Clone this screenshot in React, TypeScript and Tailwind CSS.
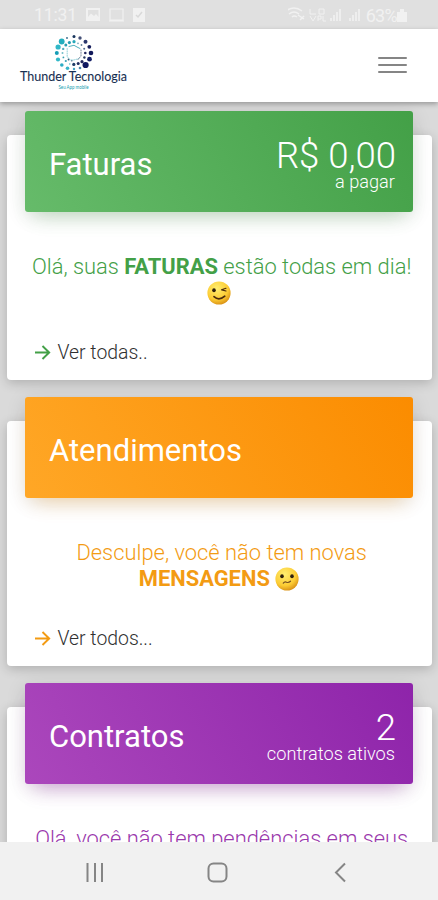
import React from "react";

interface PanelProps {
  title: string;
  value?: string;
  caption?: string;
  headerClass: string;
  textClass: string;
  link?: string;
  children: React.ReactNode;
}

const ArrowIcon: React.FC = () => (
  <svg className="w-4 h-4 flex-shrink-0" viewBox="0 0 16 16" fill="none" stroke="currentColor" strokeWidth="1.9">
    <path d="M0 7.5H14M7.5 1L14.2 7.5L7.5 14" />
  </svg>
);

const Panel: React.FC<PanelProps> = ({
  title,
  value,
  caption,
  headerClass,
  textClass,
  link,
  children,
}) => (
  <section className="h-[245px] flex flex-col rounded bg-white shadow-[0_3px_12px_rgba(0,0,0,0.2)] flex-shrink-0">
    <div
      className={`-mt-6 mx-[18.5px] h-[100.5px] flex-shrink-0 rounded-[3px] pl-6 pr-[18px] flex items-center justify-between text-white ${headerClass}`}
    >
      <h2 className="text-[31px] leading-9 pt-[7px]">{title}</h2>
      {value && (
        <div className="text-right font-light pt-[9px]">
          <div className="text-[36.5px] leading-[33px] -mr-px">{value}</div>
          <div className="text-[18.2px] leading-[20px]">{caption}</div>
        </div>
      )}
    </div>
    <p className={`mt-[42.5px] h-[53px] text-center text-[21.9px] leading-[26px] font-light whitespace-nowrap ${textClass}`}>
      {children}
    </p>
    {link && (
      <div className={`mt-[34px] ml-7 flex items-center gap-[7px] ${textClass}`}>
        <ArrowIcon />
        <span className="text-[19.4px] leading-6 font-light text-[#303030]">{link}</span>
      </div>
    )}
  </section>
);

const Face: React.FC<{ wink?: boolean }> = ({ wink }) => (
  <svg className="inline-block w-6 h-6 align-[-5px]" viewBox="0 0 24 24">
    <defs>
      <radialGradient id={wink ? "winkFill" : "plainFill"} cx="0.4" cy="0.3" r="0.75">
        <stop offset="0" stopColor="#ffee70" />
        <stop offset="0.65" stopColor="#fccb33" />
        <stop offset="1" stopColor="#d58a12" />
      </radialGradient>
    </defs>
    <circle cx="12" cy="12" r="11.6" fill={wink ? "url(#winkFill)" : "url(#plainFill)"} />
    <ellipse cx="7" cy="9.2" rx="1.8" ry="2" fill="#30200d" />
    {wink ? (
      <g fill="none" stroke="#4b2b0c" strokeLinecap="round">
        <path d="M14.5 8.8L19 7.2M14.7 8.9L19 10" strokeWidth="1.1" />
        <path d="M7 15.7Q12 20.3 17.8 15.2" strokeWidth="1.7" />
      </g>
    ) : (
      <>
        <ellipse cx="17" cy="9.2" rx="1.8" ry="2" fill="#30200d" />
        <path
          d="M8.3 16.2Q9.7 14.3 11.5 15.2T15.5 14.2"
          fill="none"
          stroke="#765020"
          strokeWidth="1.2"
          strokeLinecap="round"
        />
      </>
    )}
  </svg>
);

// x, y, radius and color of each dot in the logo ring
const dots: Array<[number, number, number, string]> = [
  [20, 2.5, 1.5, "#17345c"],
  [26, 4, 1.7, "#455077"],
  [31.5, 7.8, 2, "#29366c"],
  [35.3, 12.8, 1.9, "#171f5d"],
  [37, 19, 2.3, "#11185a"],
  [35.5, 25.2, 2.4, "#151f67"],
  [31.6, 31, 3.1, "#10175f"],
  [26, 34, 1.3, "#4c86aa"],
  [20, 35, 1.2, "#44a7c5"],
  [13.5, 34.2, 1.8, "#38b5cb"],
  [7.8, 31, 1.8, "#2dacc4"],
  [4, 25.5, 2.1, "#31b8c8"],
  [2.8, 19, 2, "#159db6"],
  [4.1, 13, 2.6, "#2fb7c7"],
  [7.7, 7.5, 2.9, "#23adbd"],
  [13, 4, 0.9, "#326789"],
  [11.8, 11, 1.5, "#289fb0"],
  [15.4, 8.6, 1.6, "#239eb2"],
  [20, 7.7, 1.6, "#27a8b9"],
  [24, 9.3, 0.9, "#79aebf"],
  [27.5, 11, 0.9, "#62819c"],
  [30.2, 14.8, 1, "#526d90"],
  [31.3, 19, 1.3, "#25285d"],
  [30.4, 23.5, 1.2, "#27385f"],
  [28, 27.7, 1.6, "#22275d"],
  [24.2, 29.6, 1.5, "#202d60"],
  [19.8, 30.4, 1.6, "#203d68"],
  [15.8, 30, 0.7, "#3bb5c6"],
  [11.8, 27, 1.1, "#36a2b7"],
  [9.4, 23.4, 0.9, "#38a1b2"],
  [8.5, 19, 1, "#71bdc7"],
  [9.2, 14.9, 1.2, "#55adbc"],
  [14.6, 25.4, 1, "#39526f"],
  [17.8, 26.8, 0.8, "#455878"],
];

const Logo: React.FC = () => (
  <div className="w-[108px] flex flex-col items-center">
    <svg className="w-[40px] h-[37px]" viewBox="0 0 40 37">
      {dots.map(([x, y, r, color]) => (
        <circle key={`${x}-${y}`} cx={x} cy={y} r={r} fill={color} />
      ))}
      <g fill="none" strokeLinecap="round">
        <path d="M15 12.5L20 11.3L23 13L26 14.5" stroke="#51b1be" strokeWidth="1" />
        <path d="M13.2 14.5V22.5L16 26H20L25 24.5" stroke="#79c7d0" strokeWidth="0.8" strokeDasharray="1 1.3" />
        <path d="M27 16V22L24 25.5" stroke="#596781" strokeWidth="0.8" strokeDasharray="1 1.4" />
      </g>
    </svg>
    <svg className="w-[108px] h-[21px]" viewBox="0 0 108 21" overflow="visible">
      <text x="0" y="9.5" fill="#172f52" stroke="#172f52" strokeWidth="0.1" fontFamily="Lato, sans-serif" fontSize="12.6" textLength="107" lengthAdjust="spacingAndGlyphs">
        Thunder Tecnologia
      </text>
      <text x="38.5" y="17.5" fill="#159eaf" fontFamily="Lato, sans-serif" fontSize="5" textLength="30" lengthAdjust="spacingAndGlyphs">
        Seu App mobile
      </text>
    </svg>
  </div>
);

const StatusBar: React.FC = () => (
  <div className="h-[29px] flex-shrink-0 bg-[#e0e0e0] pl-[34px] pr-[31px] flex items-center justify-between text-[#f1f1f1] text-[17.5px]">
    <div className="flex items-center gap-[9px]">
      <span className="w-[43px] tracking-[-0.1px] pt-0.5">11:31</span>
      <svg className="w-[62px] h-4" viewBox="0 0 62 16">
        <path
          fill="currentColor"
          fillRule="evenodd"
          d="M0 1H14V14H0ZM2 3V10L5 6.5L8 9L10 7L12.5 10V3Z"
        />
        <path d="M24 2H37V13H24ZM23 14H38" fill="none" stroke="currentColor" strokeWidth="1.2" />
        <path d="M47 1H59V15H47Z" fill="currentColor" />
        <path d="M50 8L52 10L56 5" fill="none" stroke="#d9d9d9" strokeWidth="1.5" />
      </svg>
    </div>
    <div className="flex items-center">
      <svg className="w-[76px] h-[17px]" viewBox="0 0 76 17" fill="none" stroke="currentColor">
        <path d="M-2 5Q6-1 14 5M1 8Q6 4 11 8M4 11Q6 9 9 11M10 9L16 13M12 14L16 10" strokeWidth="1.5" />
        <path d="M22 3V8H28M31 3V8H36V3H31M22 10L25 15L28 10M30 15V10H33V13H30M35 10V15H38" />
        <path
          d="M43 15V12M46 15V9M49 15V6M52 15V3M62 15V12M65 15V9M68 15V6M71 15V3"
          strokeWidth="2"
          opacity=".8"
        />
      </svg>
      <span className="text-[18px] tracking-[-0.7px] pt-0.5 ml-0.5">63%</span>
      <svg className="w-2.5 h-3.5 mt-0.5" viewBox="0 0 10 14" fill="currentColor">
        <path d="M3 0H7V3H10V13H0V3H3Z" />
      </svg>
    </div>
  </div>
);

const App: React.FC = () => {
  return (
    <div className="w-[438px] h-[900px] overflow-hidden flex flex-col bg-[#dadada] font-[Roboto,sans-serif]">
      <StatusBar />
      <header className="relative z-10 h-[73px] flex-shrink-0 bg-white pl-5 pr-[31px] pt-[5px] flex items-start justify-between shadow-[0_2px_5px_rgba(0,0,0,0.3)]">
        <Logo />
        <button aria-label="Menu" className="mt-[23px] flex flex-col gap-[5px]">
          <span className="w-[29px] h-[2px] rounded-sm bg-[#858585]" />
          <span className="w-[29px] h-[2px] rounded-sm bg-[#858585]" />
          <span className="w-[29px] h-[2px] rounded-sm bg-[#858585]" />
        </button>
      </header>
      <main className="h-[740px] flex-shrink-0 overflow-hidden px-[6.5px] pt-[33px] flex flex-col gap-[41px]">
        <Panel
          title="Faturas"
          value="R$ 0,00"
          caption="a pagar"
          headerClass="bg-[linear-gradient(60deg,#66bb6a,#43a047)] shadow-[0_12px_20px_-10px_rgba(76,175,80,0.3),0_4px_20px_rgba(0,0,0,0.12)]"
          textClass="text-[#43a047]"
          link="Ver todas.."
        >
          &nbsp;Olá, suas <b className="font-bold">FATURAS</b> estão todas em dia!
          <br />
          <Face wink />
        </Panel>
        <Panel
          title="Atendimentos"
          headerClass="bg-[linear-gradient(60deg,#ffa726,#fb8c00)] shadow-[0_12px_20px_-10px_rgba(255,152,0,0.3),0_4px_20px_rgba(0,0,0,0.12)]"
          textClass="text-[#f39b13]"
          link="Ver todos..."
        >
          &nbsp;Desculpe, você não tem novas
          <br />
          <b className="font-bold">MENSAGENS</b> <Face />
        </Panel>
        <Panel
          title="Contratos"
          value="2"
          caption="contratos ativos"
          headerClass="bg-[linear-gradient(60deg,#ab47bc,#8e24aa)] shadow-[0_12px_20px_-10px_rgba(156,39,176,0.4),0_4px_20px_rgba(0,0,0,0.12)]"
          textClass="text-[#9a38ac]"
        >
          &nbsp;Olá, você não tem pendências em seus
        </Panel>
      </main>
      <nav className="relative z-10 h-[58px] flex-shrink-0 bg-[#f1f1f1] flex justify-center">
        <svg className="w-[438px] h-[58px]" viewBox="0 0 438 58" fill="none" stroke="#858585" strokeWidth="2">
          <path d="M87.5 21V40M95 21V40M102 21V40" />
          <rect x="208.5" y="21.5" width="18" height="18" rx="5" />
          <path d="M345 21.5L336 30.5L345 39.5" />
        </svg>
      </nav>
    </div>
  );
};

export default App;
